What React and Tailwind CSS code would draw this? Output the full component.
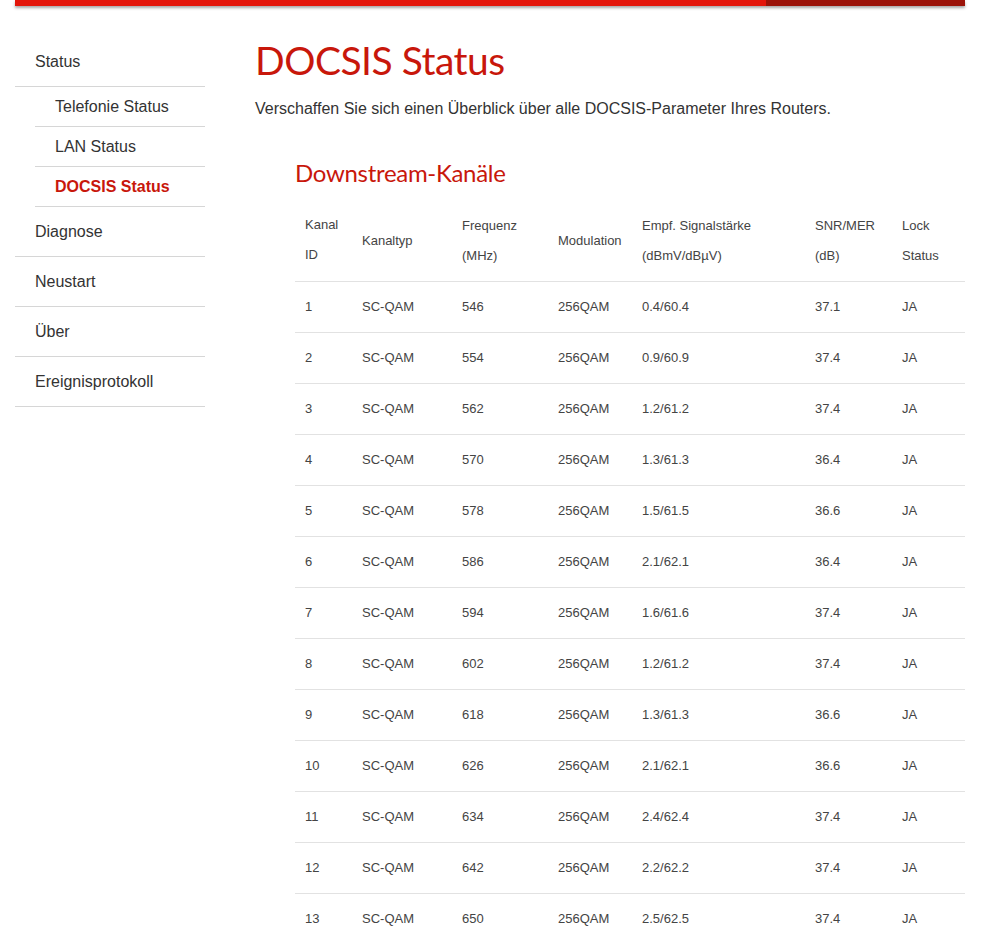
const navItems = [
  { label: "Status", sub: false },
  { label: "Telefonie Status", sub: true },
  { label: "LAN Status", sub: true },
  { label: "DOCSIS Status", sub: true, active: true },
  { label: "Diagnose", sub: false },
  { label: "Neustart", sub: false },
  { label: "Über", sub: false },
  { label: "Ereignisprotokoll", sub: false },
];

const rows = [
  [1, 546, "0.4/60.4", "37.1"],
  [2, 554, "0.9/60.9", "37.4"],
  [3, 562, "1.2/61.2", "37.4"],
  [4, 570, "1.3/61.3", "36.4"],
  [5, 578, "1.5/61.5", "36.6"],
  [6, 586, "2.1/62.1", "36.4"],
  [7, 594, "1.6/61.6", "37.4"],
  [8, 602, "1.2/61.2", "37.4"],
  [9, 618, "1.3/61.3", "36.6"],
  [10, 626, "2.1/62.1", "36.6"],
  [11, 634, "2.4/62.4", "37.4"],
  [12, 642, "2.2/62.2", "37.4"],
  [13, 650, "2.5/62.5", "37.4"],
];

function Sidebar() {
  return (
    <nav className="w-[190px] shrink-0 pt-[31px]">
      {navItems.map((item) =>
        item.sub ? (
          <div key={item.label} className="pl-5">
            <div
              className={
                "h-10 flex items-center pl-5 border-b border-[#d6d6d6] text-[16px] " +
                (item.active ? "text-[#c8170b] font-bold" : "text-[#333]")
              }
            >
              {item.label}
            </div>
          </div>
        ) : (
          <div
            key={item.label}
            className="h-[50px] flex items-center pl-5 border-b border-[#d6d6d6] text-[16px] text-[#333]"
          >
            {item.label}
          </div>
        )
      )}
    </nav>
  );
}

export default function App() {
  return (
    <div className="w-[996px] h-[930px] overflow-hidden bg-white font-['Liberation_Sans',Arial,sans-serif] text-[#333]">
      {/* top bar */}
      <div className="ml-[15px] w-[950px] h-[6px] flex shadow-[0_2px_3px_rgba(0,0,0,0.35)]">
        <div className="flex-1 bg-[#e3160b]" />
        <div className="w-[199px] bg-[#9b1309]" />
      </div>

      <div className="flex pl-[15px]">
        <Sidebar />

        <main className="pl-[50px] w-[760px]">
          <h1 className="mt-[26px] text-[39px] leading-[56px] text-[#c8170b] font-['Lato','Open_Sans',sans-serif] tracking-[-0.5px]">
            DOCSIS Status
          </h1>
          <p className="mt-[11px] text-[16px] leading-[20px] text-[#333]">
            Verschaffen Sie sich einen Überblick über alle DOCSIS-Parameter Ihres Routers.
          </p>

          <section className="pl-10 mt-[38px]">
            <h2 className="text-[24px] leading-[32px] text-[#c8170b] font-['Lato','Open_Sans',sans-serif] tracking-[-0.3px]">
              Downstream-Kanäle
            </h2>

            <table className="mt-[11px] w-[670px] border-collapse text-[13px] text-[#444]">
              <thead>
                <tr className="border-b border-[#e2e2e2] align-middle leading-[30px]">
                  <th className="w-[57px] text-left font-normal pl-[10px] pt-[10px] pb-[11px]">
                    Kanal<br />ID
                  </th>
                  <th className="w-[100px] text-left font-normal pl-[10px]">Kanaltyp</th>
                  <th className="w-[96px] text-left font-normal pl-[10px]">
                    Frequenz<br />(MHz)
                  </th>
                  <th className="w-[84px] text-left font-normal pl-[10px]">Modulation</th>
                  <th className="w-[173px] text-left font-normal pl-[10px]">
                    Empf. Signalstärke<br />(dBmV/dBµV)
                  </th>
                  <th className="w-[87px] text-left font-normal pl-[10px]">
                    SNR/MER<br />(dB)
                  </th>
                  <th className="text-left font-normal pl-[10px]">
                    Lock<br />Status
                  </th>
                </tr>
              </thead>
              <tbody>
                {rows.map(([id, freq, power, snr]) => (
                  <tr key={id} className="h-[51px] border-b border-[#e2e2e2]">
                    <td className="pl-[10px]">{id}</td>
                    <td className="pl-[10px]">SC-QAM</td>
                    <td className="pl-[10px]">{freq}</td>
                    <td className="pl-[10px]">256QAM</td>
                    <td className="pl-[10px]">{power}</td>
                    <td className="pl-[10px]">{snr}</td>
                    <td className="pl-[10px]">JA</td>
                  </tr>
                ))}
              </tbody>
            </table>
          </section>
        </main>
      </div>
    </div>
  );
}
